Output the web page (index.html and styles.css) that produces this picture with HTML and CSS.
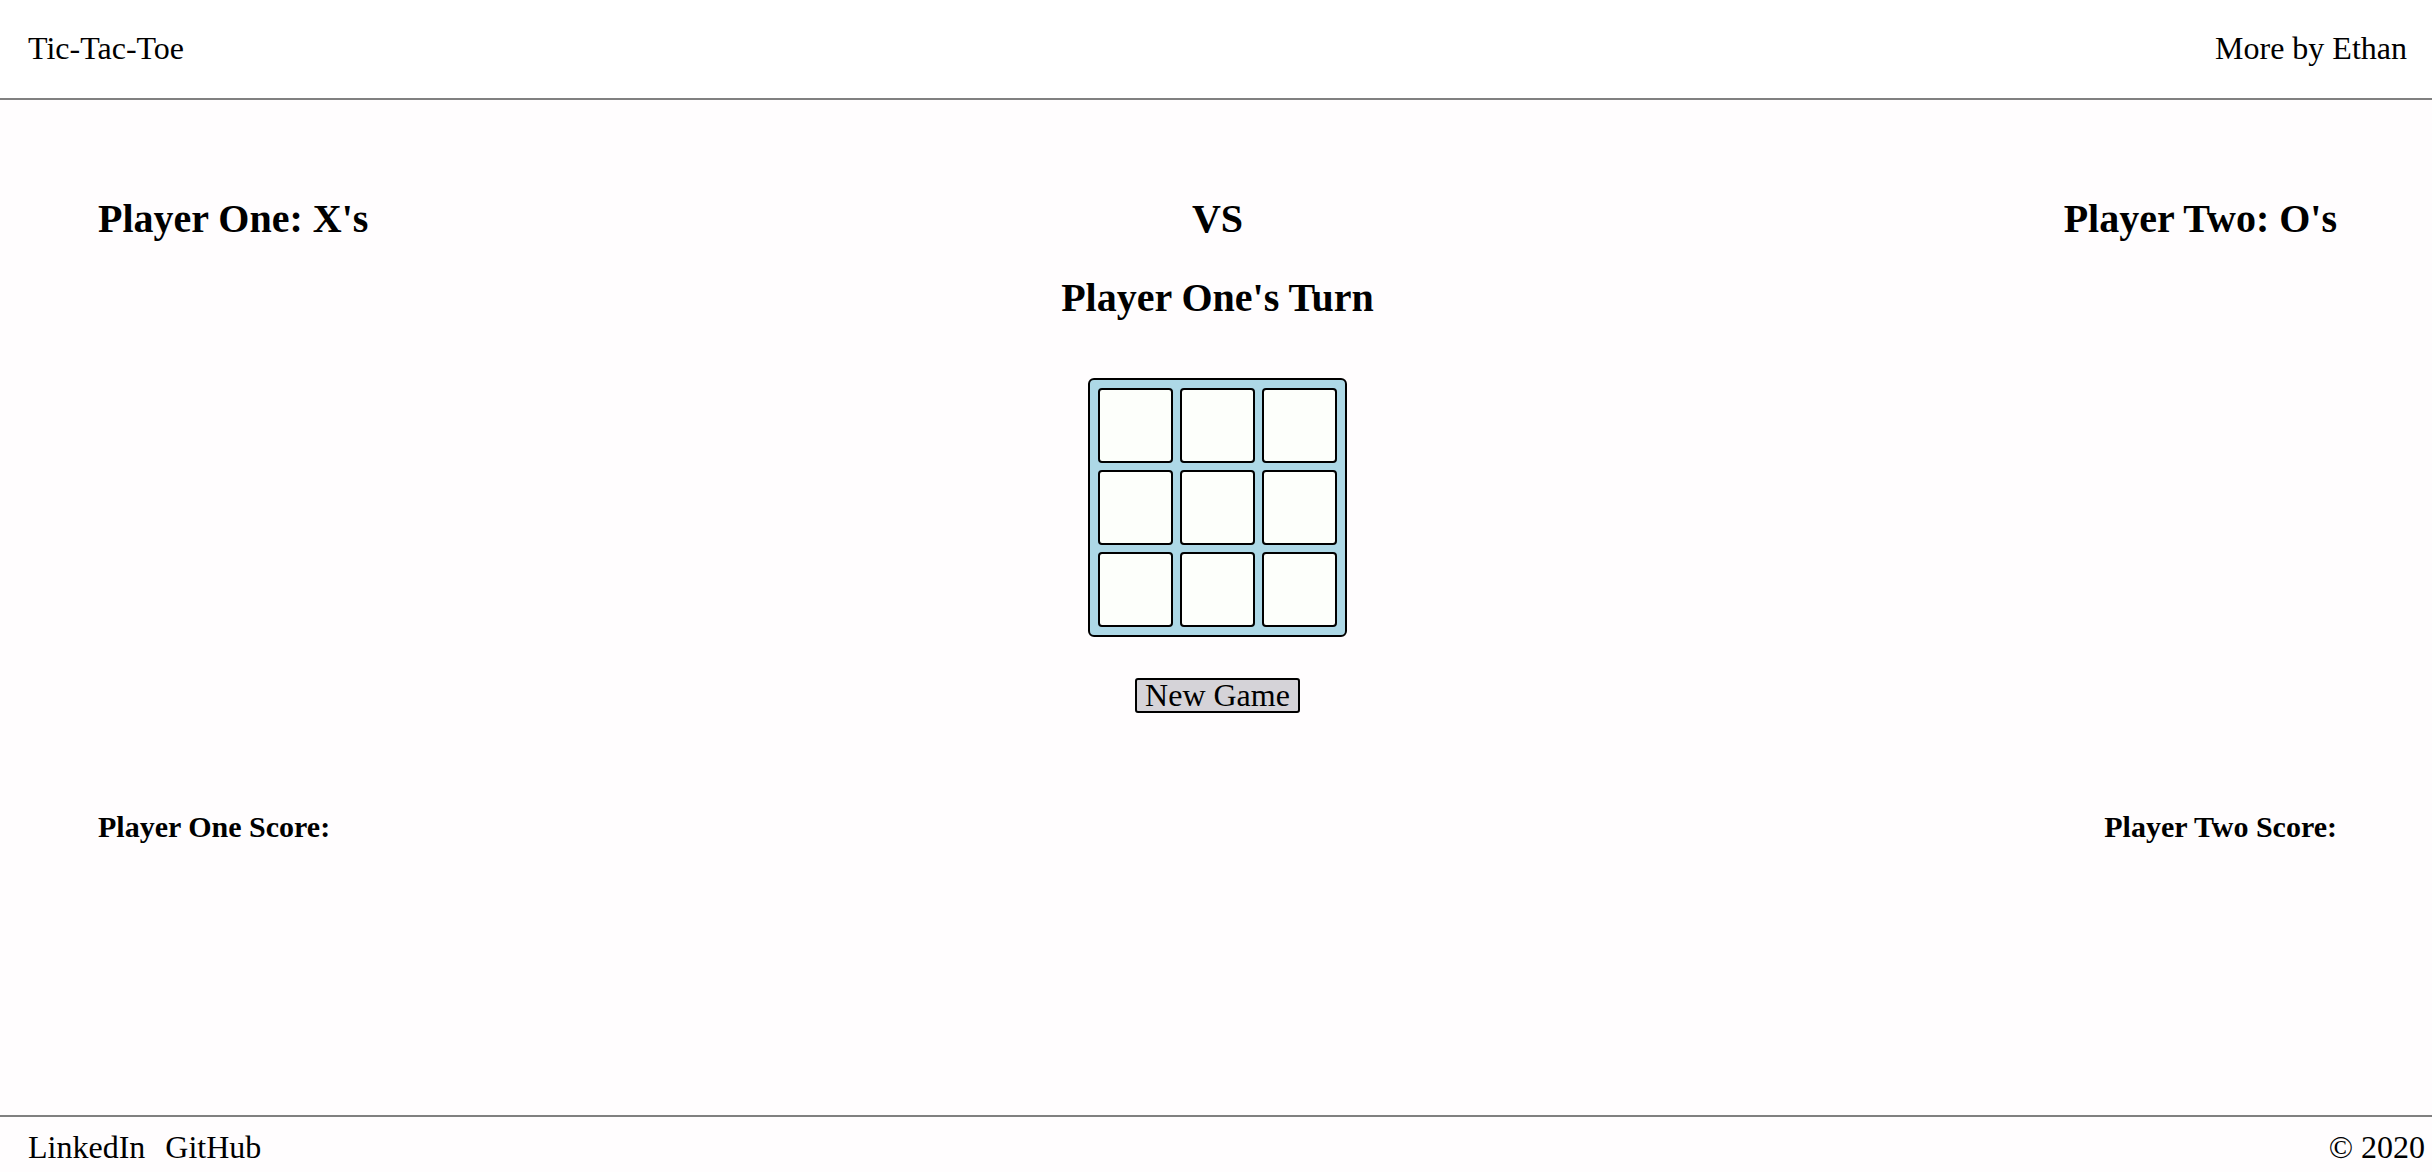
FILE: index.html
```html
<!DOCTYPE html>
<html lang="en">
<head>
<meta charset="utf-8">
<title>Tic-Tac-Toe</title>
<link rel="stylesheet" href="styles.css">
</head>
<body>
<header class="topbar">
  <span class="brand">Tic-Tac-Toe</span>
  <span class="more">More by Ethan</span>
</header>
<main class="game">
  <div class="players">
    <h2 class="p-left">Player One: X's</h2>
    <h2 class="p-mid">VS</h2>
    <h2 class="p-right">Player Two: O's</h2>
  </div>
  <h2 class="turn">Player One's Turn</h2>
  <div class="board">
    <div class="cell"></div><div class="cell"></div><div class="cell"></div>
    <div class="cell"></div><div class="cell"></div><div class="cell"></div>
    <div class="cell"></div><div class="cell"></div><div class="cell"></div>
  </div>
  <button class="new-game" type="button">New Game</button>
  <div class="scores">
    <h3>Player One Score:</h3>
    <h3>Player Two Score:</h3>
  </div>
</main>
<footer class="footbar">
  <div class="links"><span>LinkedIn</span><span>GitHub</span></div>
  <span class="copy">© 2020</span>
</footer>
</body>
</html>
```
FILE: styles.css
```css
html, body {
  margin: 0;
  padding: 0;
}
body {
  font-family: "Liberation Serif", "Times New Roman", serif;
  background: #fffdfe;
  color: #000;
  min-height: 100vh;
  display: flex;
  flex-direction: column;
}
.topbar {
  display: flex;
  justify-content: space-between;
  align-items: center;
  font-size: 32px;
  line-height: 37px;
  padding: 30px 25px 31px 28px;
  border-bottom: 2px solid #808080;
  background: #ffffff;
}
.game {
  flex: 1;
  display: flex;
  flex-direction: column;
  align-items: center;
  padding: 0 95px 0 98px;
}
.players {
  align-self: stretch;
  display: grid;
  grid-template-columns: 1fr auto 1fr;
  margin-top: 96px;
}
h2 {
  margin: 0;
  font-size: 40px;
  line-height: 46px;
  font-weight: bold;
}
.p-left { justify-self: start; }
.p-mid { justify-self: center; }
.p-right { justify-self: end; }
.turn {
  margin-top: 33px;
}
.board {
  margin-top: 57px;
  display: grid;
  grid-template-columns: repeat(3, 75px);
  grid-template-rows: repeat(3, 75px);
  gap: 7px;
  padding: 8px;
  background: #add8e6;
  border: 2px solid #000;
  border-radius: 6px;
}
.cell {
  box-sizing: border-box;
  background: #fdfffb;
  border: 2px solid #000;
  border-radius: 4px;
}
.new-game {
  margin-top: 41px;
  font-family: "Liberation Serif", "Times New Roman", serif;
  font-size: 32px;
  line-height: 31px;
  padding: 0 8px;
  color: #000;
  background: #d5d3d8;
  border: 2px solid #000;
  border-radius: 3px;
}
.scores {
  align-self: stretch;
  display: flex;
  justify-content: space-between;
  margin-top: 97px;
}
h3 {
  margin: 0;
  font-size: 30px;
  line-height: 34px;
  font-weight: bold;
}
.footbar {
  display: flex;
  justify-content: space-between;
  align-items: flex-start;
  font-size: 32px;
  line-height: 37px;
  padding: 12px 7px 6px 28px;
  border-top: 2px solid #808080;
}
.links {
  display: flex;
  gap: 20px;
}
```
